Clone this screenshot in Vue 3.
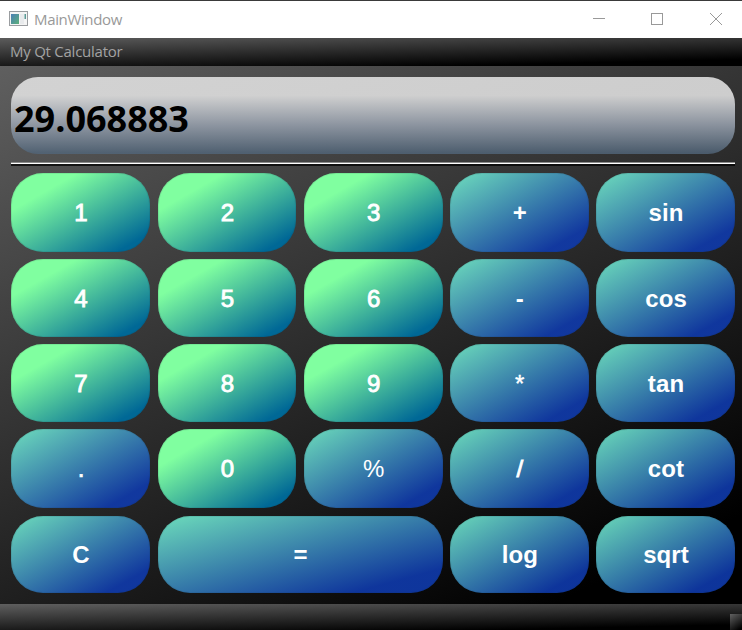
<script setup>
const keys = [
  { t: '1', k: 'num' }, { t: '2', k: 'num' }, { t: '3', k: 'num' }, { t: '+' }, { t: 'sin' },
  { t: '4', k: 'num' }, { t: '5', k: 'num' }, { t: '6', k: 'num' }, { t: '-' }, { t: 'cos' },
  { t: '7', k: 'num' }, { t: '8', k: 'num' }, { t: '9', k: 'num' }, { t: '*', k: 'star' }, { t: 'tan' },
  { t: '.', k: 'dot' }, { t: '0', k: 'num' }, { t: '%', k: 'thin' }, { t: '/', k: 'slash' }, { t: 'cot' },
  { t: 'C' }, { t: '=', k: 'wide' }, { t: 'log' }, { t: 'sqrt' },
]
</script>

<template>
  <div class="window">
    <header class="titlebar">
      <svg class="app-icon" width="19" height="15" viewBox="0 0 19 15">
        <defs>
          <linearGradient id="pane" x1="0" y1="0" x2="1" y2="1">
            <stop offset="0" stop-color="#4a7fb5" />
            <stop offset="1" stop-color="#5cb07a" />
          </linearGradient>
        </defs>
        <rect x="0.5" y="0.5" width="18" height="14" fill="#f4f4f4" stroke="#9a9da0" />
        <rect x="2" y="3" width="8" height="10" fill="url(#pane)" />
        <rect x="11" y="3" width="4" height="10" fill="#e8eaec" />
        <rect x="15.500" y="3" width="1.500" height="5" fill="#5b9a96" />
      </svg>
      <span class="title">MainWindow</span>
      <svg class="controls" width="130" height="14" viewBox="0 0 130 14" fill="none" stroke="#999">
        <path d="M1 6.500H13" />
        <rect x="59.500" y="1.500" width="11" height="11" />
        <path d="M118 1L130 13M130 1L118 13" />
      </svg>
    </header>
    <nav class="menubar">My Qt Calculator</nav>
    <main class="body">
      <div class="display">29.068883</div>
      <div class="rule"></div>
      <div class="pad">
        <button v-for="key in keys" :key="key.t" :class="['key', key.k]"><span>{{ key.t }}</span></button>
      </div>
    </main>
    <footer class="statusbar"><div class="grip"></div></footer>
  </div>
</template>

<style>
body { margin: 0; }
</style>

<style scoped>
.window {
  width: 742px;
  height: 630px;
  box-sizing: border-box;
  display: flex;
  flex-direction: column;
  border-top: 1px solid #3a3a3a;
  overflow: hidden;
  background: #000;
}
.titlebar {
  height: 37px;
  background: #fff;
  display: flex;
  align-items: center;
  padding: 0 20px 2px 9px;
  box-sizing: border-box;
}
.title {
  margin-left: 6px;
  font: 15px "Open Sans", sans-serif;
  letter-spacing: -0.35px;
  color: #999;
}
.controls { margin-left: auto; }
.menubar {
  height: 28px;
  box-sizing: border-box;
  padding-left: 10px;
  font: 15px/27px "Open Sans", sans-serif;
  letter-spacing: -0.25px;
  color: #a3a3a3;
  background: linear-gradient(178.7deg, #5c5c5c, #000 85%);
}
.body {
  height: 538px;
  box-sizing: border-box;
  padding: 11px 7px 0 11px;
  background: linear-gradient(154.6deg, #5f5f5f, #000 90%);
}
.display {
  height: 77px;
  box-sizing: border-box;
  border-radius: 27px;
  padding-left: 3px;
  font: bold 36px/84px "Open Sans", sans-serif;
  color: #000;
  background: linear-gradient(180deg, rgba(228, 228, 228, 0.87) 24%, rgba(151, 160, 173, 0.88) 62%, rgba(82, 102, 122, 0.82) 98%);
}
.rule {
  height: 4px;
  margin-top: 8px;
  background: linear-gradient(#8c8c8c 0 1px, #fff 1px 2px, rgba(0, 0, 0, 0.75) 2px);
}
.pad {
  margin-top: 7px;
  display: grid;
  grid-template-columns: 139.1px 138.8px 138.7px 138.5px 138.9px;
  grid-template-rows: 79px 78px 78px 79px 78px;
  column-gap: 7.5px;
  row-gap: 7px;
}
.key {
  border: 0;
  padding: 1px 0 0 1px;
  border-radius: 32px;
  color: #fff;
  font: bold 24px "Liberation Sans", sans-serif;
  letter-spacing: 0.1px;
  background: linear-gradient(to bottom right, rgba(117, 241, 204, 0.9), rgba(15, 58, 172, 0.9) 84%);
  box-shadow: inset 0 0 0 1px rgba(20, 50, 60, 0.1);
}
.key:nth-child(n + 21) { margin-top: 1px; }
.num {
  font-weight: normal;
  -webkit-text-stroke: 0.9px #fff;
  background: linear-gradient(to bottom right, #80ffa0 24%, #006896 88%);
}
.thin { font-weight: normal; }
.slash { font-weight: normal; -webkit-text-stroke: 0.9px #fff; }
.star { font-weight: normal; -webkit-text-stroke: 0.4px #fff; }
.dot { font-weight: normal; -webkit-text-stroke: 0.7px #fff; }
.wide { grid-column: span 2; }
.statusbar {
  height: 26px;
  display: flex;
  justify-content: flex-end;
  align-items: flex-end;
  background: linear-gradient(178.8deg, #5f5f5f, #000 87%);
}
.grip {
  width: 12px;
  height: 16px;
  background: linear-gradient(145deg, #626262, #000 90%);
}
</style>
